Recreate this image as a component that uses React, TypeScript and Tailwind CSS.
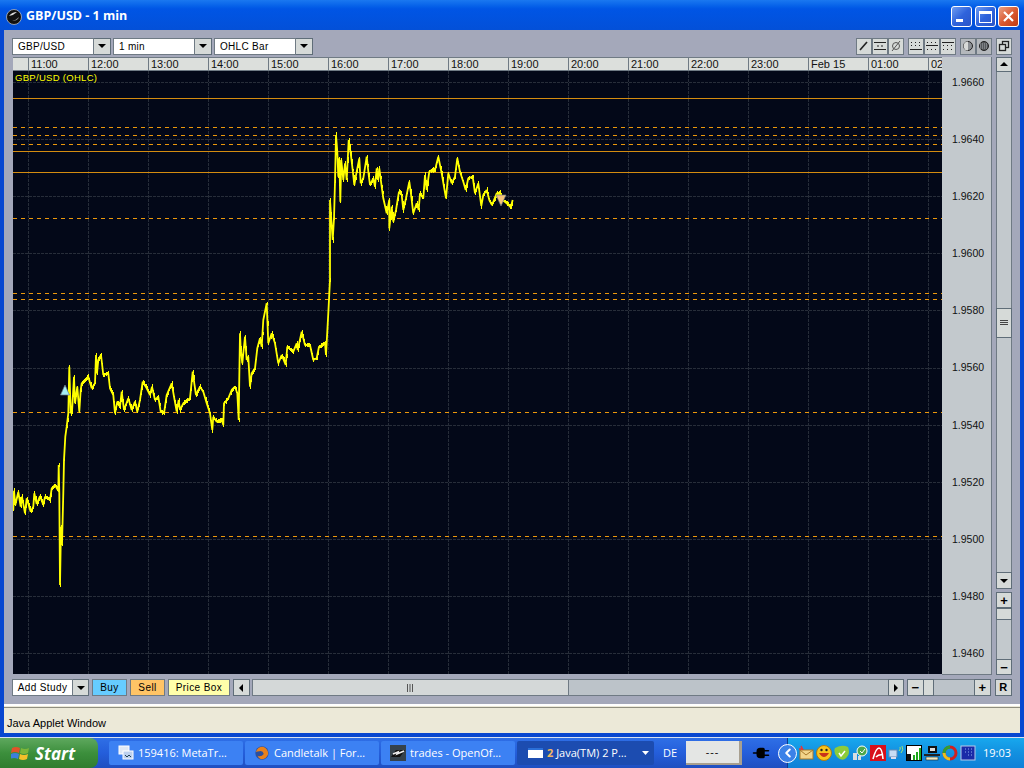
import type { ReactNode } from 'react'
import { ChevronLeft, Plug } from 'lucide-react'

const FONT = "font-['Liberation_Sans',Arial,sans-serif]"

const timeLabels = ['11:00', '12:00', '13:00', '14:00', '15:00', '16:00', '17:00', '18:00', '19:00', '20:00', '21:00', '22:00', '23:00', 'Feb 15', '01:00', '02']
const prices = ['1.9660', '1.9640', '1.9620', '1.9600', '1.9580', '1.9560', '1.9540', '1.9520', '1.9500', '1.9480', '1.9460']

// first stretch read off the chart at 3x, relative to (0, 280)
const leftTrace = [40,690,42,632,46,675,55,636,62,680,66,650,75,700,80,655,92,695,100,680,103,640,110,672,120,648,130,675,135,650,150,660,155,625,165,615,175,632,176,555,178,640,180,915,183,740,186,795,190,640,192,540,196,470,200,440,205,400,208,260,212,400,216,395,222,290,225,370,232,320,238,395,242,330,245,310,255,300,265,290,275,325,285,310,288,225,291,280,295,240,303,225,310,285,325,280,330,325,340,345,345,400,352,365,360,380,365,335,372,390,385,355,395,390,405,365,412,395,420,360,428,305,440,325,450,345,456,320,465,360,475,350,482,395,492,400,500,345,515,310,522,350,530,395,536,360,540,390,550,370,570,355,578,275,583,310,588,345,600,320,610,335,620,370,630,400,637,450,640,410,650,425,665,420,670,435,672,370,685,355,695,330,705,320,712,340,716,420,718,290,720,160,722,205,727,250,735,170,740,240,745,230,750,320,755,280,765,265,772,205,780,175,785,200,790,120,800,70,805,190,815,160,825,190,835,250,845,225,857,255,862,200,880,215,890,190,893,210,905,155,915,195,930,195,940,240,950,235,957,200,975,190,978,225,985,100,990,0]

// second stretch, relative to (320, 120)
const rightTrace = [30,240,38,360,42,295,45,185,48,45,52,95,55,170,58,115,61,245,64,120,70,180,75,130,80,180,86,60,92,100,98,150,103,195,110,155,118,115,122,190,130,175,140,110,146,165,150,195,160,175,165,200,170,145,174,180,178,145,185,200,190,235,200,280,208,240,208,325,215,260,220,305,228,270,237,215,245,225,250,270,258,235,268,185,272,215,280,280,290,250,296,270,300,220,310,235,315,165,320,210,328,155,335,150,345,150,355,110,365,160,378,235,385,160,395,190,405,170,412,115,420,155,430,185,437,210,445,175,458,170,465,220,475,190,484,258,490,225,500,210,508,240,516,255,530,220,540,218,548,240,560,250,572,262,578,240]

function toCoords(raw: number[], ox: number, oy: number) {
  const out: [number, number][] = []
  for (let i = 0; i < raw.length; i += 2) {
    out.push([ox + raw[i] / 3 - 13, oy + raw[i + 1] / 3 - 71])
  }
  return out
}

const trace = [...toCoords(leftTrace, 0, 280), ...toCoords(rightTrace, 320, 120)]
const pricePath = trace.map(([x, y]) => `${x.toFixed(1)},${y.toFixed(1)}`).join(' ')

// short high/low ticks along the line so it reads as 1 min bars
function buildTicks() {
  let d = ''
  let n = 0
  for (let i = 1; i < trace.length; i++) {
    const [x0, y0] = trace[i - 1]
    const [x1, y1] = trace[i]
    const steps = Math.max(1, Math.round(Math.abs(x1 - x0)))
    for (let s = 0; s < steps; s++) {
      const x = Math.round(x0 + ((x1 - x0) * s) / steps) + 0.5
      const y = y0 + ((y1 - y0) * s) / steps
      const r = Math.abs(Math.sin(n++ * 12.9898) * 43758.5453) % 1
      const half = 1 + r * 1.8
      d += `M${x} ${(y - half).toFixed(0)}V${(y + half).toFixed(0)}`
    }
  }
  return d
}

const ticks = buildTicks()
const DASHED = [73.5, 56.5, 64.5, 147.5, 222.5, 228.5, 341.5, 465.5]
const SOLID = [27.5, 80.5, 101.5]

function Chart() {
  const vlines = Array.from({ length: 16 }, (_, i) => 15.5 + i * 60)
  const hlines = Array.from({ length: 11 }, (_, i) => Math.round(11 + i * 57.1) + 0.5)
  return (
    <svg width="929" height="603" viewBox="0 0 929 603" className="block">
      <rect width="929" height="603" fill="#030818" />
      {vlines.map((x) => (
        <line key={x} x1={x} x2={x} y1="0" y2="603" stroke="#272d39" strokeDasharray="3 1" />
      ))}
      {hlines.map((y) => (
        <line key={y} x1="0" x2="929" y1={y} y2={y} stroke="#272d39" strokeDasharray="3 1" />
      ))}
      {SOLID.map((y) => (
        <line key={y} x1="0" x2="929" y1={y} y2={y} stroke="#d48c10" />
      ))}
      {DASHED.map((y) => (
        <line key={y} x1="0" x2="929" y1={y} y2={y} stroke="#ec980c" strokeDasharray="4 4" />
      ))}
      <polyline points={pricePath} fill="none" stroke="#ffff00" strokeWidth="1.8" strokeLinejoin="bevel" />
      <path d={ticks} stroke="#ffff00" strokeWidth="1" shapeRendering="crispEdges" />
      <path d="M47.5 324 L52 314 L56.5 324 Z" fill="#a5eef5" stroke="#6a7a88" strokeWidth="0.7" />
      <path d="M483 124 L488 135 L493 124 Z" fill="#f5c27a" stroke="#6a7a88" strokeWidth="0.7" />
    </svg>
  )
}

function Arrow({ dir }: { dir: 'up' | 'down' | 'left' | 'right' }) {
  const d = { up: 'M1 6 L5 2 L9 6 Z', down: 'M1 3 L9 3 L5 7 Z', left: 'M6 1 L6 9 L2 5 Z', right: 'M3 1 L3 9 L7 5 Z' }[dir]
  return (
    <svg width="10" height="10" viewBox="0 0 10 10">
      <path d={d} fill="#000" />
    </svg>
  )
}

function Btn({ className, children }: { className: string; children?: ReactNode }) {
  return (
    <div className={`flex shrink-0 items-center justify-center border border-[#5f6d78] bg-[#d6dad8] ${className}`}>
      {children}
    </div>
  )
}

function Combo({ label }: { label: string }) {
  return (
    <div className="flex h-[17px] w-[99px]">
      <div className="flex w-[82px] items-center border border-[#6f7a84] bg-white pl-[5px] text-[10px] tracking-[0.3px] text-black">{label}</div>
      <Btn className="w-[17px] border-l-0"><Arrow dir="down" /></Btn>
    </div>
  )
}

function ToolIcon({ children, bg = 'bg-[#d6dad8]' }: { children: ReactNode; bg?: string }) {
  return (
    <div className={`flex h-[17px] w-[16px] items-center justify-center border border-[#6f7a84] ${bg}`}>
      <svg width="14" height="14" viewBox="0 0 14 14" fill="none" stroke="#222" strokeWidth="1">
        {children}
      </svg>
    </div>
  )
}

function TopToolbar() {
  return (
    <div className="flex h-[27px] items-center pl-[8px] pr-[8px] pt-[5px]">
      <div className="flex gap-[2px]">
        <Combo label="GBP/USD" />
        <Combo label="1 min" />
        <Combo label="OHLC Bar" />
      </div>
      <div className="ml-auto flex items-center">
        <ToolIcon><path d="M3 11 L10 3" strokeWidth="1.6" /></ToolIcon>
        <ToolIcon><path d="M1 3.5 H13 M1 10.5 H13 M4 7 H6 M8 7 H10" /></ToolIcon>
        <ToolIcon><path d="M3 12 L11 2" stroke="#555" /><circle cx="7" cy="7" r="3.5" stroke="#555" /></ToolIcon>
        <div className="w-[4px]" />
        <ToolIcon><path d="M2 3.5 H3 M6 3.5 H7 M10 3.5 H11 M2 6.5 H3 M6 6.5 H7 M10 6.5 H11 M1 10.5 H13" /></ToolIcon>
        <ToolIcon><path d="M2 3.5 H3 M6 3.5 H7 M10 3.5 H11 M1 6.5 H13 M2 10.5 H3 M6 10.5 H7 M10 10.5 H11" /></ToolIcon>
        <ToolIcon><path d="M1 3.5 H13 M2 6.5 H3 M6 6.5 H7 M10 6.5 H11 M2 10.5 H3 M6 10.5 H7 M10 10.5 H11" /></ToolIcon>
        <div className="w-[4px]" />
        <div className="flex">
          <ToolIcon bg="bg-[#b4b8bc]"><circle cx="7" cy="7" r="4.5" fill="#8c9094" /><path d="M7 2.5 A4.5 4.5 0 0 0 7 11.5 Z" fill="#d8dad8" stroke="none" /></ToolIcon>
          <ToolIcon bg="bg-[#b4b8bc]"><circle cx="7" cy="7" r="4.5" fill="#55585c" /><path d="M3 5 H11 M3 7 H11 M3 9 H11" stroke="#a8acb0" strokeDasharray="1 1" /></ToolIcon>
        </div>
        <div className="w-[4px]" />
        <ToolIcon><rect x="5.5" y="2.5" width="6" height="6" strokeWidth="1.3" /><rect x="2.5" y="5.5" width="6" height="6" fill="#d6dad8" strokeWidth="1.3" /></ToolIcon>
      </div>
    </div>
  )
}

function TimeAxis() {
  return (
    <div className="flex h-[14px] w-[929px] overflow-hidden border-y border-[#6f7a84] bg-[#dcdfdc] text-[11px] leading-[12px] text-[#111]">
      <div className="w-[15px] shrink-0" />
      {timeLabels.map((t) => (
        <div key={t} className="w-[60px] shrink-0 border-l border-[#6f7a84] pl-[2px]">{t}</div>
      ))}
    </div>
  )
}

function PriceAxis() {
  return (
    <div className="flex h-[618px] w-[50px] flex-col border-r border-b border-[#6f7a84] bg-[#c3c9cd] pt-[18px] pl-[10px] text-[10.5px] text-[#111]">
      {prices.map((p) => (
        <div key={p} className="h-[57.1px] shrink-0 leading-[14px]">{p}</div>
      ))}
    </div>
  )
}

function RightScroll() {
  return (
    <div className="flex w-[16px] flex-col">
      <Btn className="h-[15px]"><Arrow dir="up" /></Btn>
      <div className="flex h-[236px] border-x border-[#6f7a84] bg-[#c3c9cd]" />
      <Btn className="h-[30px]">
        <svg width="8" height="6" viewBox="0 0 8 6"><path d="M0 .5 H8 M0 2.5 H8 M0 4.5 H8" stroke="#444" /></svg>
      </Btn>
      <div className="h-[234px] border-x border-[#6f7a84] bg-[#c3c9cd]" />
      <Btn className="h-[17px]"><Arrow dir="down" /></Btn>
      <div className="h-[3px]" />
      <Btn className="h-[16px]"><span className="text-[13px] font-bold leading-none">+</span></Btn>
      <Btn className="h-[12px]" />
      <div className="h-[39px] border-x border-[#6f7a84] bg-[#c3c9cd]" />
      <Btn className="h-[16px]"><span className="text-[13px] font-bold leading-none">−</span></Btn>
    </div>
  )
}

function BottomBar() {
  return (
    <div className="flex h-[17px] items-stretch pl-[8px] text-[10px] tracking-[0.4px] text-black">
      <div className="flex w-[61px] items-center justify-center border border-[#6f7a84] bg-white">Add Study</div>
      <Btn className="w-[16px] border-l-0"><Arrow dir="down" /></Btn>
      <div className="ml-[3px] flex w-[35px] items-center justify-center border border-[#6f7a84] bg-[#66ccff]">Buy</div>
      <div className="ml-[3px] flex w-[35px] items-center justify-center border border-[#6f7a84] bg-[#ffc466]">Sell</div>
      <div className="ml-[3px] flex w-[62px] items-center justify-center border border-[#6f7a84] bg-[#ffffaa]">Price Box</div>
      <Btn className="ml-[3px] w-[17px]"><Arrow dir="left" /></Btn>
      <div className="ml-[2px] flex w-[317px] items-center justify-center border border-[#6f7a84] bg-[#d4d8d8]">
        <svg width="7" height="8" viewBox="0 0 7 8"><path d="M.5 0 V8 M3 0 V8 M5.5 0 V8" stroke="#555" /></svg>
      </div>
      <div className="w-[319px] border-y border-[#6f7a84] bg-[#bcc3c9]" />
      <Btn className="w-[16px]"><Arrow dir="right" /></Btn>
      <Btn className="ml-[3px] w-[17px]"><span className="text-[13px] font-bold leading-none">−</span></Btn>
      <Btn className="w-[10px] border-l-0" />
      <div className="w-[40px] border-y border-[#6f7a84] bg-[#bcc3c9]" />
      <Btn className="w-[17px]"><span className="text-[13px] font-bold leading-none">+</span></Btn>
      <Btn className="ml-[4px] w-[17px]"><span className="text-[11px] font-bold leading-none">R</span></Btn>
    </div>
  )
}

function WinButton({ children, red }: { children: ReactNode; red?: boolean }) {
  return (
    <div className={`flex h-[21px] w-[21px] items-center justify-center rounded-[3px] border border-white ${red ? 'bg-gradient-to-br from-[#e9a184] via-[#da5a32] to-[#c03a10]' : 'bg-gradient-to-br from-[#6f9bf0] via-[#2f63dc] to-[#2a55c8]'}`}>
      {children}
    </div>
  )
}

function TitleBar() {
  return (
    <div className="flex h-[30px] items-center bg-gradient-to-b from-[#1a78f0] from-0% via-[#0055e5] via-30% to-[#0350d8] pl-[6px] pr-[5px] pt-[3px]">
      <svg width="16" height="16" viewBox="0 0 16 16">
        <circle cx="8" cy="8" r="7.5" fill="#111" stroke="#ccc" strokeWidth="0.7" />
        <path d="M3 7 Q6 3 11 3 Q8 6 3 7 Z" fill="#ddd" />
        <path d="M6 12 Q10 11 13 8 Q12 12 6 12 Z" fill="#888" />
      </svg>
      <span className="ml-[4px] font-['Open_Sans',sans-serif] text-[12.5px] font-bold text-white">GBP/USD - 1 min</span>
      <div className="ml-auto flex gap-[2.5px]">
        <WinButton><div className="mt-[8px] mr-[5px] h-[3px] w-[7px] bg-white" /></WinButton>
        <WinButton><div className="h-[12px] w-[13px] border border-t-[3px] border-white" /></WinButton>
        <WinButton red>
          <svg width="13" height="13" viewBox="0 0 13 13"><path d="M2 2 L11 11 M11 2 L2 11" stroke="#fff" strokeWidth="2.2" /></svg>
        </WinButton>
      </div>
    </div>
  )
}

function TaskButton({ w, active, icon, children }: { w: string; active?: boolean; icon: ReactNode; children: ReactNode }) {
  return (
    <div className={`flex h-[24px] items-center gap-[4px] rounded-[2px] text-[11px] text-white ${w} ${active ? 'bg-[#1c4cb0]' : 'bg-[#3c81f3]'}`}>
      {icon}
      {children}
    </div>
  )
}

function TrayIcon({ children }: { children: ReactNode }) {
  return (
    <svg width="16" height="16" viewBox="0 0 16 16" className="shrink-0">
      {children}
    </svg>
  )
}

function Taskbar() {
  return (
    <div className="flex h-[30px] items-center bg-gradient-to-b from-[#2f6fe6] via-[#245edb] to-[#1f4fc0] font-['Open_Sans',sans-serif]">
      <div className="flex h-full w-[98px] items-center rounded-r-[8px] bg-gradient-to-b from-[#5ea85e] via-[#3c8f3c] to-[#2f7d2f] pl-[11px]">
        <svg width="19" height="18" viewBox="0 0 19 18">
          <path d="M1 4 Q5 2 9 4 L8 9 Q4 7 0 9 Z" fill="#e2532a" />
          <path d="M10 4 Q14 6 18 4 L17 9 Q13 11 9 9 Z" fill="#7cb63a" />
          <path d="M0 10 Q4 8 8 10 L7 15 Q3 13 -1 15 Z" fill="#3d7fdc" />
          <path d="M9 10 Q13 12 17 10 L16 15 Q12 17 8 15 Z" fill="#f4c02a" />
        </svg>
        <span className="ml-[5px] text-[17px] font-bold italic leading-none text-white">Start</span>
      </div>
      <div className="ml-[11px] flex items-center gap-[2px]">
        <TaskButton w="w-[134px] pl-[9px]" icon={
          <svg width="16" height="16" viewBox="0 0 16 16"><rect x="1" y="1" width="10" height="8" fill="#dfe8f5" stroke="#fff" /><rect x="5" y="6" width="10" height="8" fill="#bcd0ee" stroke="#fff" /><path d="M7 10 L9 12 L11 10 L13 12" stroke="#245" fill="none" /></svg>
        }>159416: MetaTr…</TaskButton>
        <TaskButton w="w-[134px] pl-[9px]" icon={
          <svg width="16" height="16" viewBox="0 0 18 18"><circle cx="9" cy="9" r="7.5" fill="#2b4f9e" /><path d="M2 8 Q4 2 10 2 Q16 4 16 10 Q14 16 8 16 Q5 15 4 12 Q8 14 11 10 Q10 6 6 7 Q4 7 2 8 Z" fill="#e8811c" /></svg>
        }>Candletalk | For…</TaskButton>
        <TaskButton w="w-[134px] pl-[9px]" icon={
          <svg width="16" height="16" viewBox="0 0 16 16"><rect width="16" height="16" fill="#35424c" /><path d="M1 12 L6 5 H15 L10 12 Z" fill="#111" /><path d="M3 9 L8 7 L7 9 L14 6" stroke="#eee" strokeWidth="1.5" fill="none" /></svg>
        }>trades - OpenOf…</TaskButton>
        <TaskButton w="w-[137px] pl-[11px]" active icon={
          <div className="h-[10px] w-[15px] border-t-2 border-[#2a6fd8] bg-white" />
        }>
          <span><b className="text-[#f5b860]">2</b> Java(TM) 2 P…</span>
          <svg className="ml-auto mr-[5px]" width="7" height="4" viewBox="0 0 7 4"><path d="M0 0 H7 L3.5 4 Z" fill="#fff" /></svg>
        </TaskButton>
      </div>
      <span className="ml-[9px] w-[14px] text-[11px] text-white">DE</span>
      <div className="ml-[9px] flex h-[24px] w-[56px] items-center justify-center border-r-[3px] border-b-[2px] border-[#a8a090] bg-[#e4e6e4] text-[11px] tracking-[1px] text-black">---</div>
      <div className="ml-[10px] w-[22px] text-black"><Plug size={18} className="rotate-90" fill="#000" /></div>
      <div className="z-10 -mr-[10px] ml-[4px] flex h-[19px] w-[19px] items-center justify-center rounded-full border border-white bg-[#3b82e8] text-white">
        <ChevronLeft size={14} strokeWidth={3.5} />
      </div>
      <div className="flex h-full flex-1 items-center gap-[2px] border-l border-[#0f3a8a] bg-gradient-to-b from-[#18a8ee] via-[#1290e0] to-[#0f80d8] pl-[10px]">
        <TrayIcon><rect x="2" y="5" width="13" height="9" fill="#f3d48a" stroke="#a8782a" /><path d="M2 5 L8 10 L15 5" fill="none" stroke="#a8782a" /><path d="M3 1 L5 5 M1 4 L5 4" stroke="#e33" strokeWidth="1.5" /></TrayIcon>
        <TrayIcon><circle cx="8" cy="8" r="7.5" fill="#f7c51d" stroke="#b07a10" /><path d="M3 8 Q8 16 13 8 Z" fill="#c8321a" /><circle cx="5.5" cy="5" r="1.2" fill="#222" /><circle cx="10.5" cy="5" r="1.2" fill="#222" /></TrayIcon>
        <TrayIcon><path d="M1 3 Q8 -1 14 2 Q17 9 11 14 Q7 16 3 12 Q-1 7 1 3 Z" fill="#8ccb3a" /><path d="M5 8 L7 11 L11 6" stroke="#fff" strokeWidth="1.5" fill="none" /></TrayIcon>
        <TrayIcon><circle cx="10" cy="6" r="5" fill="#4ca84c" stroke="#fff" /><path d="M8 6 L10 8 L13 4" stroke="#fff" fill="none" /><path d="M1 8 H5 V15 H1 Z M6 11 H9 V15 H6 Z" fill="#d8dde0" /></TrayIcon>
        <TrayIcon><rect width="16" height="16" fill="#d8101a" /><path d="M3 14 Q6 3 9 3 Q12 3 13 14 M6 12 Q9 9 13 10" stroke="#fff" strokeWidth="1.6" fill="none" /></TrayIcon>
        <TrayIcon><rect x="1" y="5" width="8" height="7" fill="#c8dcf4" stroke="#6a8ab4" /><rect x="3" y="12" width="5" height="2" fill="#dde" /><path d="M11 6 Q13 4 12 2 M13 8 Q16 5 14 1" stroke="#9fe070" fill="none" /></TrayIcon>
        <TrayIcon><rect x="0.5" y="0.5" width="15" height="15" fill="#fff" stroke="#000" /><rect x="1" y="9" width="4" height="6" fill="#111" /><path d="M7 15 V10 H9 V15 M10 15 V7 H12 V15 M13 15 V3 H15 V15" fill="#1da81d" /></TrayIcon>
        <TrayIcon><rect x="4" y="1" width="9" height="7" fill="#111" /><rect x="6" y="3" width="5" height="3" fill="#ddd" /><rect x="0" y="9" width="16" height="2" fill="#222" /><rect x="2" y="12" width="12" height="3" fill="#f0e8c0" stroke="#222" strokeWidth="0.6" /></TrayIcon>
        <TrayIcon><circle cx="8" cy="8" r="6" fill="none" stroke="#d02020" strokeWidth="3" /><path d="M2 8 A6 6 0 0 1 8 2" stroke="#30a030" strokeWidth="3" fill="none" /><path d="M8 14 A6 6 0 0 1 2 8" stroke="#e8c020" strokeWidth="3" fill="none" /></TrayIcon>
        <TrayIcon><rect x="1" y="1" width="14" height="14" fill="#1a2aa8" stroke="#b8c8e8" /><path d="M5 4 H6 M8 4 H9 M11 4 H12 M5 7 H6 M8 7 H9 M11 7 H12 M8 10 H9 M11 10 H12" stroke="#8fb0f0" /></TrayIcon>
        <span className="ml-[5px] text-[11px] text-white">19:03</span>
      </div>
    </div>
  )
}

export default function App() {
  return (
    <div className={`flex h-[768px] w-[1024px] flex-col overflow-hidden bg-[#0a50d8] ${FONT}`}>
      <TitleBar />
      <div className="flex h-[707px] flex-col border-x-4 border-b-[4px] border-[#0847d0]">
        <div className="flex h-[674px] flex-col bg-[#a4a8ba]">
          <TopToolbar />
          <div className="flex h-[622px] pl-[9px]">
            <div className="flex w-[929px] flex-col">
              <TimeAxis />
              <div className="relative">
                <Chart />
                <div className="absolute left-[2px] top-0 text-[9.5px] leading-[13px] tracking-[0.3px] text-[#ffff00]">GBP/USD (OHLC)</div>
              </div>
            </div>
            <PriceAxis />
            <div className="ml-[4px]"><RightScroll /></div>
          </div>
          <BottomBar />
        </div>
        <div className="h-[4px] border-t-2 border-b border-t-white border-b-[#8f8e80] bg-[#ece9d8]" />
        <div className="flex h-[25px] items-end bg-[#ece9d8] pb-[3px] pl-[3px] text-[11px] leading-[14px] text-black">Java Applet Window</div>
      </div>
      <div className="h-[1px] bg-[#d8e0f0]" />
      <Taskbar />
    </div>
  )
}
